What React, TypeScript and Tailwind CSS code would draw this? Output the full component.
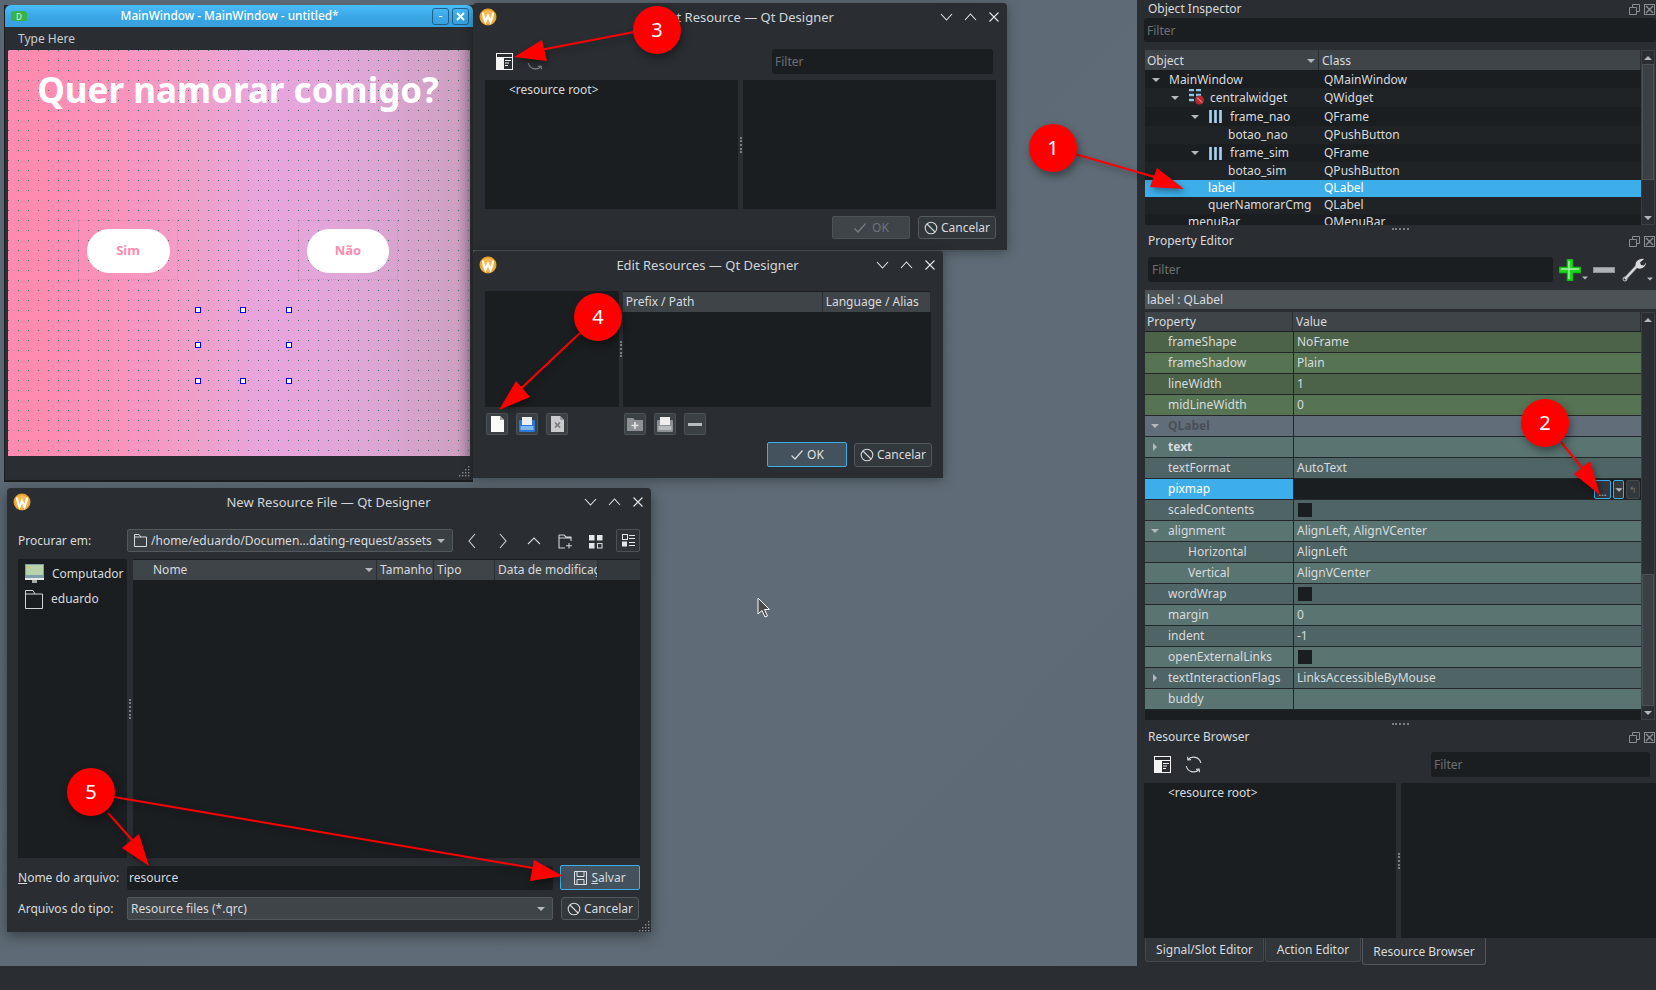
import React from "react";

const FONT = "font-['Noto_Sans',sans-serif]";

function WIcon({ className }: { className: string }) {
  return (
    <svg viewBox="0 0 18 18" className={className}>
      <circle cx="9" cy="9" r="8.5" fill="#e8a02c" />
      <circle cx="9" cy="9" r="6.8" fill="#f2bc55" />
      <path d="M3.6 4.5 L6.4 14 L9 7.6 L11.6 14 L14.4 4.5" fill="none" stroke="#fff" strokeWidth="2" />
    </svg>
  );
}

function WinControls() {
  return (
    <svg viewBox="0 0 60 14" className="w-[60px] h-[14px] shrink-0" fill="none" stroke="#e4e7ea" strokeWidth="1.1">
      <path d="M1 4 L6.5 10 L12 4" />
      <path d="M25 10 L30.5 4 L36 10" />
      <path d="M49.5 2.5 L58.5 11.5 M58.5 2.5 L49.5 11.5" />
    </svg>
  );
}

function Title({ text }: { text: string }) {
  return (
    <div className="h-[28px] mb-[2px] shrink-0 grid grid-cols-[1fr_auto_1fr] items-center pl-[6px] pr-[7px]">
      <WIcon className="w-[18px] h-[18px]" />
      <div className="text-center text-[13px] text-[#d2d6da] whitespace-nowrap pt-[1px]">{text}</div>
      <div className="flex justify-end"><WinControls /></div>
    </div>
  );
}

function Filter({ className }: { className: string }) {
  return (
    <div className={`bg-[#1b1e20] rounded-[3px] text-[12px] text-[#6c7074] flex items-center px-[3px] ${className}`}>Filter</div>
  );
}

function NoSign({ className }: { className: string }) {
  return (
    <svg viewBox="0 0 14 14" className={className} fill="none" stroke="#d4d7da" strokeWidth="1.1">
      <circle cx="7" cy="7" r="5.8" />
      <path d="M3 3 L11 11" />
    </svg>
  );
}

function Check({ color }: { color: string }) {
  return (
    <svg viewBox="0 0 14 12" className="w-[14px] h-[12px]" fill="none" stroke={color} strokeWidth="1.2">
      <path d="M1.5 6.5 L5 10 L12.5 1.5" />
    </svg>
  );
}

function CancelBtn({ className }: { className: string }) {
  return (
    <div className={`bg-[#33383d] border border-[#53585d] rounded-[3px] flex items-center justify-center gap-[3px] text-[12px] text-[#d8dbde] ${className}`}>
      <NoSign className="w-[14px] h-[14px]" />
      Cancelar
    </div>
  );
}

function ResIcon() {
  return (
    <svg viewBox="0 0 17 17" className="w-[17px] h-[17px] shrink-0">
      <rect width="17" height="17" fill="#f4f4f4" />
      <rect x="1" y="1" width="15" height="3" fill="#2a2e32" />
      <rect x="8" y="5" width="8" height="11" fill="#2a2e32" />
      <rect x="9" y="7" width="6" height="1" fill="#eee" />
      <rect x="9" y="9.5" width="4" height="1" fill="#eee" />
      <rect x="9" y="12" width="3" height="1" fill="#eee" />
    </svg>
  );
}

function ReloadIcon({ color }: { color: string }) {
  return (
    <svg viewBox="0 0 17 17" className="w-[17px] h-[17px]" fill="none" stroke={color} strokeWidth="1.1">
      <path d="M3 3.5 A7.5 7.5 0 0 1 15.8 7" />
      <path d="M14 13.5 A7.5 7.5 0 0 1 1.2 10" />
      <path d="M2.6 0.8 L2.8 4 L6 3.6" />
      <path d="M14.4 16.2 L14.2 13 L11 13.4" />
    </svg>
  );
}

function ToolBtn({ children }: { children: React.ReactNode }) {
  return (
    <div className="w-[22px] h-[22px] bg-[#3b4045] border border-[#4d5257] rounded-[2px] flex items-center justify-center shrink-0">
      {children}
    </div>
  );
}

function DocIcon({ fill, x }: { fill: string; x?: boolean }) {
  return (
    <svg viewBox="0 0 13 16" className="w-[13px] h-[16px]">
      <path d="M0 0 H9 L13 4 V16 H0 Z" fill={fill} />
      <path d="M9 0 L13 4 H9 Z" fill="#9a9ea2" />
      {x && <path d="M4 6.5 L9 11.5 M9 6.5 L4 11.5" stroke="#777" strokeWidth="1.6" />}
    </svg>
  );
}

function SaveIcon({ blue }: { blue: boolean }) {
  const a = blue ? "#2a78d4" : "#8d9195";
  const b = blue ? "#7fb8f0" : "#b8bbbe";
  return (
    <svg viewBox="0 0 16 15" className="w-[16px] h-[15px]">
      <rect y="3" width="16" height="12" rx="1" fill={a} />
      <rect x="3" y="0" width="10" height="8" fill="#eee" />
      <rect x="1.5" y="9" width="13" height="4" fill={b} />
    </svg>
  );
}

function Header({ children, className }: { children: React.ReactNode; className: string }) {
  return (
    <div className={`bg-[#3f4449] border-r border-[#2a2e32] text-[12px] text-[#d8dbde] flex items-center overflow-hidden whitespace-nowrap h-full ${className}`}>
      {children}
    </div>
  );
}

function Tri({ dir = "down", className = "" }: { dir?: "down" | "right" | "up"; className?: string }) {
  const d = dir === "down" ? "M0 1 H8 L4 5 Z" : dir === "right" ? "M2 -1 L6 3 L2 7 Z" : "M0 5 H8 L4 1 Z";
  return (
    <svg viewBox="0 0 8 6" className={`w-[8px] h-[6px] shrink-0 overflow-visible ${className}`}>
      <path d={d} fill="#b4b8bc" />
    </svg>
  );
}

function Grip() {
  return (
    <svg viewBox="0 0 12 12" className="w-[12px] h-[12px]" fill="#888c90">
      {[[10,1],[7,4],[10,4],[4,7],[7,7],[10,7],[1,10],[4,10],[7,10],[10,10]].map(([x, y], i) => (
        <rect key={i} x={x} y={y} width="1.4" height="1.4" />
      ))}
    </svg>
  );
}

function Dots({ className }: { className: string }) {
  return <div className={`border-l-2 border-dotted border-[#7a7e82] ${className}`} />;
}

function MainWindow() {
  const handles: [number, number][] = [
    [190, 260], [235, 260], [281, 260],
    [190, 295], [281, 295],
    [190, 331], [235, 331], [281, 331],
  ];
  return (
    <div className="absolute left-[4px] top-[5px] w-[469px] h-[477px] bg-[#2a2e32] flex flex-col border-b-2 border-l border-[#1b1e20]">
      <div className="h-[22px] shrink-0 rounded-t-[6px] bg-[linear-gradient(#4bbdfb,#3aa6e4_55%,#37a0dd)] flex items-center pl-[6px] pr-[4px]">
        <svg viewBox="0 0 16 12" className="w-[16px] h-[12px] shrink-0">
          <path d="M2 1 H14 L16 3 V11 H2 L0 9 V3 Z" fill="#37b34a" />
          <text x="8" y="9.5" textAnchor="middle" fontSize="8" fill="#dff5df" fontFamily="Noto Sans">D</text>
        </svg>
        <div className="flex-1 text-center text-[11.8px] font-medium text-white">MainWindow - MainWindow - untitled*</div>
        <div className="flex gap-[3px]">
          <div className="w-[17px] h-[17px] rounded-[3px] border border-[#1f5f88] flex items-center justify-center text-[12px] leading-none text-white">-</div>
          <div className="w-[17px] h-[17px] rounded-[3px] border border-[#1f5f88] flex items-center justify-center">
            <svg viewBox="0 0 9 9" className="w-[9px] h-[9px]" stroke="#fff" strokeWidth="1.8"><path d="M1 1 L8 8 M8 1 L1 8" /></svg>
          </div>
        </div>
      </div>
      <div className="h-[23px] shrink-0 flex items-center pl-[13px] text-[12px] text-[#c8ccd0]">Type Here</div>
      <div className="mx-[3px] h-[406px] shrink-0 relative overflow-hidden bg-[linear-gradient(90deg,#ff8ab0_0%,#ff8bb1_8%,#f697c0_30%,#efa0cc_42%,#e8a5dd_55%,#e0a6d8_75%,#cfa0c2_97%,#a8829f_100%)]">
        <div className="absolute inset-0 bg-[radial-gradient(circle_at_0.5px_0.5px,#3d6e5e_0.7px,transparent_0.7px)] bg-[length:10px_10px]" />
        <div className="absolute left-[29px] top-[18px] w-[402px] text-center text-[35px] leading-[44px] font-bold text-white whitespace-nowrap">Quer namorar comigo?</div>
        <div className="absolute left-[70px] top-[170px] w-[100px] h-[60px] pt-[2px] border border-dotted border-[#c48ab0]/70 flex items-center justify-center">
          <div className="w-[83px] h-[44px] rounded-[22px] bg-white flex items-center justify-center text-[13px] font-bold text-[#ff8ab0]">Sim</div>
        </div>
        <div className="absolute left-[290px] top-[170px] w-[100px] h-[60px] pt-[2px] border border-dotted border-[#c48ab0]/70 flex items-center justify-center">
          <div className="w-[82px] h-[44px] rounded-[22px] bg-white flex items-center justify-center text-[13px] font-bold text-[#ff8ab0]">Não</div>
        </div>
        {handles.map(([x, y], i) => (
          <div key={i} className="absolute w-[6px] h-[6px] bg-white border border-[#0000ff]" style={{ left: x - 3 + "px", top: y - 3 + "px" }} />
        ))}
      </div>
      <div className="flex-1 flex justify-end items-end pr-[3px] pb-[3px]">
        <Grip />
      </div>
    </div>
  );
}

function SelectResource() {
  return (
    <div className="absolute left-[473px] top-[3px] w-[534px] h-[247px] bg-[#2a2e32] rounded-t-[4px] flex flex-col shadow-[0_2px_12px_rgba(0,0,0,0.35)]">
      <Title text="Select Resource — Qt Designer" />
      <div className="h-[47px] shrink-0 flex items-center pl-[23px] pr-[14px] pt-[9px]">
        <ResIcon />
        <div className="ml-[14px] opacity-60"><ReloadIcon color="#b8bcc0" /></div>
        <div className="flex-1" />
        <Filter className="w-[221px] h-[25px] pt-[1px]" />
      </div>
      <div className="h-[129px] shrink-0 flex mx-[12px] items-stretch">
        <div className="w-[253px] bg-[#1b1e20] pl-[24px] pt-[1px] text-[12px] text-[#d8dbde]">&lt;resource root&gt;</div>
        <div className="w-[5px] flex items-center justify-center"><Dots className="h-[16px]" /></div>
        <div className="flex-1 bg-[#1b1e20] mr-[-1px]" />
      </div>
      <div className="flex justify-end gap-[8px] pr-[11px] pt-[7px]">
        <div className="w-[78px] h-[23px] bg-[#3f4449] border border-[#4d5257] rounded-[2px] flex items-center justify-center gap-[5px] text-[12px] text-[#6f7377]">
          <Check color="#7a7e82" />OK
        </div>
        <CancelBtn className="w-[78px] h-[23px]" />
      </div>
    </div>
  );
}

function EditResources() {
  return (
    <div className="absolute left-[473px] top-[250px] w-[470px] h-[228px] bg-[#2a2e32] border-t border-[#43484d] rounded-t-[4px] flex flex-col shadow-[0_2px_12px_rgba(0,0,0,0.35)]">
      <Title text="Edit Resources — Qt Designer" />
      <div className="h-[116px] mt-[10px] shrink-0 flex mx-[12px]">
        <div className="w-[134px] bg-[#1b1e20]" />
        <div className="w-[4px] flex items-center justify-center"><Dots className="h-[16px]" /></div>
        <div className="w-[309px] bg-[#1b1e20] flex flex-col">
          <div className="h-[20px] mt-[1px] flex">
            <Header className="w-[200px] pl-[3px]">Prefix / Path</Header>
            <Header className="flex-1 pl-[3px]">Language / Alias</Header>
          </div>
        </div>
      </div>
      <div className="flex mt-[6px] pl-[13px] gap-[8px]">
        <ToolBtn><DocIcon fill="#fafafa" /></ToolBtn>
        <ToolBtn><SaveIcon blue /></ToolBtn>
        <ToolBtn><DocIcon fill="#c8cacc" x /></ToolBtn>
        <div className="w-[40px]" />
        <ToolBtn>
          <svg viewBox="0 0 16 14" className="w-[16px] h-[14px]">
            <path d="M0 1 H6 L8 3 H16 V14 H0 Z" fill="#8d9195" />
            <path d="M8 5 V12 M4.5 8.5 H11.5" stroke="#e4e4e4" strokeWidth="1.6" />
          </svg>
        </ToolBtn>
        <ToolBtn><SaveIcon blue={false} /></ToolBtn>
        <ToolBtn>
          <div className="w-[14px] h-[3px] bg-[#b8bbbe]" />
        </ToolBtn>
      </div>
      <div className="flex justify-end gap-[7px] pr-[11px] pt-[7px] items-center">
        <div className="w-[80px] h-[25px] bg-[#43525c] border border-[#3daee9] rounded-[2px] flex items-center justify-center gap-[3px] text-[12px] text-[#e0e3e6]">
          <Check color="#d8dbde" />OK
        </div>
        <CancelBtn className="w-[78px] h-[24px]" />
      </div>
    </div>
  );
}

function NavIcons() {
  return (
    <div className="flex items-center">
      <svg viewBox="0 0 150 16" className="w-[150px] h-[16px] ml-[12px] shrink-0" fill="none" stroke="#d0d4d8" strokeWidth="1.1">
        <path d="M10 1 L4 8 L10 15" />
        <path d="M35 1 L41 8 L35 15" />
        <path d="M63 11 L69 5 L75 11" />
        <path d="M94 2 H99 L101 4 H106 V8 M94 2 V15 H100 M94 5 H106 M104 10 V15.5 M101 12.8 H107" />
        <g fill="#e4e7ea" stroke="none">
          <rect x="124" y="2" width="5.5" height="5.5" />
          <rect x="132" y="2" width="5.5" height="5.5" />
          <rect x="124" y="10" width="5.5" height="5.5" />
        </g>
        <rect x="132.5" y="10.5" width="4.5" height="4.5" />
      </svg>
      <div className="w-[24px] h-[23px] ml-[1px] bg-[#2f3338] border border-[#4d5257] rounded-[2px] flex items-center justify-center">
        <svg viewBox="0 0 13 13" className="w-[13px] h-[13px]" fill="#e4e7ea">
          <rect x="0.5" y="0.5" width="5" height="5" fill="none" stroke="#e4e7ea" />
          <rect x="7" y="1" width="6" height="1" />
          <rect x="7" y="4" width="6" height="1" />
          <rect x="0" y="7.5" width="5" height="5" />
          <rect x="7" y="8" width="6" height="1" />
          <rect x="7" y="11" width="6" height="1" />
        </svg>
      </div>
    </div>
  );
}

function NewResource() {
  return (
    <div className="absolute left-[7px] top-[488px] w-[644px] h-[444px] bg-[#2a2e32] rounded-t-[4px] flex flex-col shadow-[0_4px_14px_rgba(0,0,0,0.4)] text-[12px] text-[#d8dbde]">
      <Title text="New Resource File — Qt Designer" />
      <div className="flex items-center h-[23px] mt-[11px] shrink-0 pl-[11px]">
        <div className="w-[109px]">Procurar em:</div>
        <div className="w-[326px] h-[23px] bg-[#3a3f44] border border-[#53585d] rounded-[2px] flex items-center pl-[6px] pr-[7px] gap-[4px]">
          <svg viewBox="0 0 13 13" className="w-[13px] h-[13px] shrink-0" fill="none" stroke="#d8dbde"><path d="M.5 12.5 V.5 H5 L7 3 H12.5 V12.5 Z M.5 3 H7" /></svg>
          <span className="flex-1 whitespace-nowrap overflow-hidden">/home/eduardo/Documen...dating-request/assets</span>
          <Tri />
        </div>
        <NavIcons />
      </div>
      <div className="h-[299px] mt-[7px] shrink-0 flex ml-[11px]">
        <div className="w-[109px] bg-[#1b1e20] pt-[4px] flex flex-col gap-[5px] pl-[7px]">
          <div className="flex items-center gap-[8px] h-[21px]">
            <svg viewBox="0 0 19 20" className="w-[19px] h-[20px] shrink-0">
              <rect x="0" y="0" width="19" height="14" fill="#7d9faa" />
              <rect x="1" y="1" width="17" height="10" fill="#b7d3ac" />
              <rect x="2" y="2" width="3" height="2" fill="#e8c05a" />
              <rect x="0" y="14" width="19" height="2" fill="#e8e8e8" />
              <rect x="7" y="16" width="5" height="3" fill="#aaa" />
            </svg>
            Computador
          </div>
          <div className="flex items-center gap-[8px] h-[20px]">
            <svg viewBox="0 0 18 19" className="w-[18px] h-[19px] shrink-0" fill="none" stroke="#d0d4d8"><path d="M.5 18.5 V.5 H8 L10 4 H17.5 V18.5 Z M.5 4 H10" /></svg>
            eduardo
          </div>
        </div>
        <div className="w-[6px] flex items-center justify-center"><Dots className="h-[20px]" /></div>
        <div className="w-[507px] bg-[#1b1e20] flex flex-col">
          <div className="h-[20px] mt-[1px] flex bg-[#33383d]">
            <Header className="w-[244px] pl-[20px] justify-between pr-[3px]">Nome<Tri /></Header>
            <Header className="w-[57px] pl-[3px]">Tamanho</Header>
            <Header className="w-[61px] pl-[3px]">Tipo</Header>
            <Header className="w-[103px] pl-[3px]">Data de modificação</Header>
          </div>
        </div>
      </div>
      <div className="flex items-center h-[25px] mt-[7px] shrink-0 pl-[11px]">
        <div className="w-[109px]"><span className="underline">N</span>ome do arquivo:</div>
        <div className="w-[426px] h-[24px] bg-[#1b1e20] rounded-[3px] flex items-center pl-[2px]">resource</div>
        <div className="w-[80px] h-[25px] ml-[7px] bg-[#43525c] border border-[#3daee9] rounded-[2px] flex items-center justify-center gap-[4px]">
          <svg viewBox="0 0 13 14" className="w-[13px] h-[14px]" fill="none" stroke="#e0e3e6"><path d="M.5 .5 H12.5 V13.5 H.5 Z M3 .5 V5.5 H10 V.5 M3 13.5 V8.5 H10 V13.5" /></svg>
          <span><span className="underline">S</span>alvar</span>
        </div>
      </div>
      <div className="flex items-center h-[23px] mt-[7px] shrink-0 pl-[11px]">
        <div className="w-[109px]">Arquivos do tipo:</div>
        <div className="w-[426px] h-[23px] bg-[#3f4449] border border-[#53585d] rounded-[2px] flex items-center justify-between pl-[3px] pr-[7px]">
          Resource files (*.qrc)<Tri />
        </div>
        <CancelBtn className="w-[78px] h-[23px] ml-[8px]" />
      </div>
      <div className="flex-1 flex justify-end items-end pr-[1px] pb-[1px]"><Grip /></div>
    </div>
  );
}

function Dock({ title }: { title: string }) {
  return (
    <div className="h-[18px] shrink-0 flex items-center justify-between pl-[11px] pr-[1px] text-[12px] text-[#d8dbde]">
      {title}
      <div className="flex gap-[4px]">
        <svg viewBox="0 0 11 11" className="w-[11px] h-[11px]" fill="none" stroke="#8a8e92"><path d="M3.5 3 V.5 H10.5 V7.5 H8 M.5 3.5 H7.5 V10.5 H.5 Z" /></svg>
        <svg viewBox="0 0 11 11" className="w-[11px] h-[11px]" fill="none" stroke="#8a8e92"><rect x=".5" y=".5" width="10" height="10" /><path d="M2 2 L9 9 M9 2 L2 9" strokeWidth="1.4" /></svg>
      </div>
    </div>
  );
}

function ScrollBar({ thumb, thumbEnd }: { thumb: string; thumbEnd?: boolean }) {
  return (
    <div className="w-[14px] mr-[1px] shrink-0 bg-[#2a2e32] border border-[#3b4045] flex flex-col">
      <div className="h-[13px] shrink-0 flex items-center justify-center"><Tri dir="up" /></div>
      <div className={`flex-1 flex flex-col ${thumbEnd ? "justify-end" : ""}`}>
        <div className={`bg-[#3b4045] border border-[#4d5257] ${thumb}`} />
      </div>
      <div className="h-[13px] shrink-0 flex items-center justify-center"><Tri /></div>
    </div>
  );
}

type TreeRow = { n: string; c: string; x: number; arrow?: boolean; icon?: "w" | "f"; h: number; sel?: boolean; adj?: string };
const tree: TreeRow[] = [
  { n: "MainWindow", c: "QMainWindow", x: 25, arrow: true, h: 18, adj: "pt-[1px]" },
  { n: "centralwidget", c: "QWidget", x: 66, arrow: true, icon: "w", h: 19 },
  { n: "frame_nao", c: "QFrame", x: 86, arrow: true, icon: "f", h: 19 },
  { n: "botao_nao", c: "QPushButton", x: 84, h: 18 },
  { n: "frame_sim", c: "QFrame", x: 86, arrow: true, icon: "f", h: 18 },
  { n: "botao_sim", c: "QPushButton", x: 84, h: 18 },
  { n: "label", c: "QLabel", x: 64, h: 17, sel: true, adj: "pb-[1px]" },
  { n: "querNamorarCmg", c: "QLabel", x: 64, h: 17, adj: "pb-[1px]" },
  { n: "menuBar", c: "QMenuBar", x: 44, h: 17, adj: "pb-[1px]" },
];

function ObjectInspector() {
  return (
    <div className="shrink-0 flex flex-col">
      <Dock title="Object Inspector" />
      <Filter className="h-[24px] ml-[7px] pt-[1px]" />
      <div className="flex h-[175px] mt-[8px] ml-[8px]">
        <div className="flex-1 flex flex-col bg-[#1b1e20] overflow-hidden">
          <div className="h-[20px] shrink-0 flex">
            <Header className="w-[174px] pl-[2px] pt-[1px] justify-between pr-[3px]">Object<Tri /></Header>
            <Header className="flex-1 pl-[3px] pt-[1px]">Class</Header>
          </div>
          {tree.map((r, i) => (
            <div key={r.n} className={`shrink-0 flex items-center text-[12px] relative ${r.adj ?? ""} ${r.sel ? "bg-[#3daee9] text-white" : i % 2 ? "bg-[#1f2326] text-[#d8dbde]" : "bg-[#1b1e20] text-[#d8dbde]"}`} style={{ height: r.h + "px" }}>
              {r.arrow && <div className="absolute flex" style={{ left: r.x - (r.icon ? 40 : 18) + "px" }}><Tri /></div>}
              {r.icon === "w" && (
                <svg viewBox="0 0 18 17" className="absolute left-[44px] w-[18px] h-[17px]">
                  <path d="M0 1 H5 M7 1 H12 M0 6 H5 M7 6 H12 M0 11 H5" stroke="#8fc3e8" strokeWidth="2.4" />
                  <circle cx="10.5" cy="11" r="4.5" fill="#b52a2a" />
                  <path d="M8 8.5 L13 13.5" stroke="#f2bcbc" />
                </svg>
              )}
              {r.icon === "f" && (
                <svg viewBox="0 0 13 13" className="absolute left-[64px] w-[13px] h-[13px]" stroke="#a8d4f4" strokeWidth="2.6">
                  <path d="M1.5 0 V13 M6.5 0 V13 M11.5 0 V13" />
                </svg>
              )}
              <div className="w-[179px] shrink-0 whitespace-nowrap" style={{ paddingLeft: r.x - 1 + "px" }}>{r.n}</div>
              <div className="flex-1">{r.c}</div>
            </div>
          ))}
        </div>
        <ScrollBar thumb="h-[116px]" />
      </div>
    </div>
  );
}

type PropRow = { n: string; v?: string; bg: string; bold?: boolean; indent?: boolean; tri?: "down" | "right"; check?: boolean; pix?: boolean; section?: boolean };
const G1 = "bg-[#4c6349]";
const G2 = "bg-[#567353]";
const T1 = "bg-[#5a7472]";
const T2 = "bg-[#4f6465]";
const props: PropRow[] = [
  { n: "frameShape", v: "NoFrame", bg: G1 },
  { n: "frameShadow", v: "Plain", bg: G2 },
  { n: "lineWidth", v: "1", bg: G1 },
  { n: "midLineWidth", v: "0", bg: G2 },
  { n: "QLabel", bg: "bg-[#616e7a]", section: true, tri: "down" },
  { n: "text", bg: T1, bold: true, tri: "right" },
  { n: "textFormat", v: "AutoText", bg: T2 },
  { n: "pixmap", bg: "bg-[#1b1e20]", pix: true },
  { n: "scaledContents", bg: T2, check: true },
  { n: "alignment", v: "AlignLeft, AlignVCenter", bg: T1, tri: "down" },
  { n: "Horizontal", v: "AlignLeft", bg: T2, indent: true },
  { n: "Vertical", v: "AlignVCenter", bg: T1, indent: true },
  { n: "wordWrap", bg: T2, check: true },
  { n: "margin", v: "0", bg: T1 },
  { n: "indent", v: "-1", bg: T2 },
  { n: "openExternalLinks", bg: T1, check: true },
  { n: "textInteractionFlags", v: "LinksAccessibleByMouse", bg: T2, tri: "right" },
  { n: "buddy", bg: T1 },
];

function PropertyEditor() {
  return (
    <div className="shrink-0 flex flex-col">
      <Dock title="Property Editor" />
      <div className="flex items-center h-[25px] mt-[7px] ml-[11px]">
        <Filter className="w-[405px] h-[25px] px-[4px]" />
        <div className="flex-1 flex items-center justify-between pl-[6px] pr-[2px]">
          <div className="flex items-end">
            <svg viewBox="0 0 22 22" className="w-[22px] h-[22px]">
              <path d="M8 0 H14 V8 H22 V14 H14 V22 H8 V14 H0 V8 H8 Z" fill="#1ed51e" stroke="#0f9a0f" strokeWidth=".8" />
              <path d="M10 2 V20 M2 10 H20" stroke="#a8f5a8" strokeWidth="1.4" />
            </svg>
            <Tri className="scale-75" />
          </div>
          <div className="w-[22px] h-[6px] bg-[#b0b4b8] border border-[#8f9397] mr-[3px]" />
          <div className="flex items-end">
            <svg viewBox="0 0 24 24" className="w-[24px] h-[24px]" fill="none">
              <path d="M3 21 L15 8" stroke="#a8acb0" strokeWidth="3" />
              <path d="M3 21 L15 8" stroke="#e4e6e8" strokeWidth="1.2" />
              <path d="M14 9 C12 4 17 0 22 1 L18 4.5 L19 7 L22 7.5 L24 4.5 C24 9 19 12 15 10 Z" fill="#d8dadc" />
              <circle cx="3" cy="21" r="2" stroke="#c8cacc" />
            </svg>
            <Tri className="scale-75" />
          </div>
        </div>
      </div>
      <div className="h-[19px] mt-[8px] ml-[8px] bg-[#4d5257] flex items-center pl-[2px] text-[12px] text-[#d8dbde]">label : QLabel</div>
      <div className="flex h-[408px] mt-[3px] ml-[8px]">
        <div className="flex-1 flex flex-col bg-[#1b1e20] overflow-hidden">
          <div className="h-[19px] shrink-0 flex">
            <Header className="w-[148px] pl-[2px]">Property</Header>
            <Header className="flex-1 pl-[3px]">Value</Header>
          </div>
          <div className="h-[1px] shrink-0 bg-[#1b1e20]" />
          {props.map((p) => (
            <div key={p.n} className={`h-[21px] shrink-0 flex text-[12px] border-b border-[#23272a] ${p.bg} ${p.section ? "text-[#4a5057] font-bold" : "text-[#d8dbde]"}`}>
              <div className={`w-[149px] shrink-0 relative flex items-center border-r border-[#23272a] ${p.pix ? "bg-[#3daee9] text-white" : ""} ${p.indent ? "pl-[43px]" : "pl-[23px]"} ${p.bold ? "font-bold" : ""}`}>
                {p.tri && <div className="absolute left-[6px] top-[7px] flex"><Tri dir={p.tri} /></div>}
                {p.n}
              </div>
              <div className="flex-1 flex items-center pl-[3px] relative">
                {p.v}
                {p.check && <div className="w-[14px] h-[14px] bg-[#1b1e20] ml-[1px]" />}
                {p.pix && (
                  <div className="absolute right-[1px] top-[1px] flex gap-[2px]">
                    <div className="w-[17px] h-[19px] bg-[#33383d] border border-[#3daee9] rounded-[2px] flex items-end justify-center text-[10px] leading-[12px] text-[#c8ccd0]">...</div>
                    <div className="w-[11px] h-[19px] bg-[#33383d] border border-[#3daee9] rounded-[2px] flex items-center justify-center"><Tri className="scale-90" /></div>
                    <div className="w-[14px] h-[19px] bg-[#33383d] border border-[#43484d] rounded-[2px] flex items-center justify-center text-[9px] text-[#6f7377]">↰</div>
                  </div>
                )}
              </div>
            </div>
          ))}
        </div>
        <ScrollBar thumb="h-[132px]" thumbEnd />
      </div>
    </div>
  );
}

function ResourceBrowser() {
  return (
    <div className="shrink-0 flex flex-col">
      <Dock title="Resource Browser" />
      <div className="h-[31px] mt-[3px] flex items-center pl-[17px] pr-[6px]">
        <ResIcon />
        <div className="ml-[14px]"><ReloadIcon color="#d8dbde" /></div>
        <div className="flex-1" />
        <Filter className="w-[219px] h-[25px]" />
      </div>
      <div className="flex h-[155px] mt-[3px] ml-[7px]">
        <div className="w-[252px] bg-[#1b1e20] pl-[24px] pt-[1px] text-[12px] text-[#d8dbde]">&lt;resource root&gt;</div>
        <div className="w-[5px] flex items-center justify-center"><Dots className="h-[16px]" /></div>
        <div className="flex-1 bg-[#1b1e20]" />
      </div>
      <div className="flex items-start ml-[8px] text-[12px] text-[#d8dbde]">
        <div className="w-[119px] h-[24px] bg-[#31363a] border border-t-0 border-[#43484d] rounded-b-[3px] flex items-center justify-center">Signal/Slot Editor</div>
        <div className="w-[96px] h-[24px] ml-[1px] bg-[#31363a] border border-t-0 border-[#43484d] rounded-b-[3px] flex items-center justify-center">Action Editor</div>
        <div className="w-[124px] h-[27px] ml-[1px] bg-[#2f3338] border border-t-0 border-[#53585d] rounded-b-[3px] flex items-center justify-center pt-[1px]">Resource Browser</div>
      </div>
    </div>
  );
}

function Splitter({ h }: { h: string }) {
  return (
    <div className={`shrink-0 flex items-center justify-center pl-[8px] ${h}`}>
      <div className="w-[17px] border-t-2 border-dotted border-[#7a7e82]" />
    </div>
  );
}

function RightPanel() {
  return (
    <div className="absolute left-[1137px] top-0 w-[519px] h-[990px] bg-[#2a2e32] flex flex-col">
      <ObjectInspector />
      <Splitter h="h-[7px]" />
      <PropertyEditor />
      <Splitter h="h-[8px]" />
      <ResourceBrowser />
    </div>
  );
}

function Annotations() {
  const circles: [number, number, string][] = [
    [1053, 148, "1"],
    [1545, 423, "2"],
    [657, 30, "3"],
    [598, 317, "4"],
    [91, 792, "5"],
  ];
  return (
    <>
      <svg viewBox="0 0 1656 990" className="absolute inset-0 w-[1656px] h-[990px] pointer-events-none drop-shadow-[2px_3px_3px_rgba(0,0,0,0.4)]" fill="#ff0000" stroke="#ff0000">
        <g strokeWidth="2" fill="none">
          <path d="M1075 154 L1165 180" />
          <path d="M1561 442 L1592 480" />
          <path d="M634 32 L530 52" />
          <path d="M580 333 L512 397" />
          <path d="M108 813 L141 850" />
          <path d="M114 797 L545 870" />
        </g>
        <g stroke="none">
          <polygon points="1157,168 1184,189 1150,187" />
          <polygon points="1590,461 1600,495 1574,474" />
          <polygon points="542,40 547,61 514,57" />
          <polygon points="516,381 530,397 499,410" />
          <polygon points="139,834 122,848 149,866" />
          <polygon points="534,860 530,881 563,876" />
        </g>
      </svg>
      {circles.map(([x, y, t]) => (
        <div key={t} className="absolute w-[48px] h-[48px] rounded-full bg-[#ff0000] flex items-center justify-center text-[20px] text-white shadow-[2px_4px_8px_rgba(0,0,0,0.4)]" style={{ left: x - 24 + "px", top: y - 24 + "px" }}>
          {t}
        </div>
      ))}
      <svg viewBox="0 0 14 22" className="absolute left-[757px] top-[597px] w-[14px] h-[22px]">
        <path d="M1 1 V17 L5 13.5 L8 20 L10.5 19 L7.5 12.5 H12.5 Z" fill="#4a4a4a" stroke="#fff" strokeWidth="1" />
      </svg>
    </>
  );
}

export default function App() {
  return (
    <div className={`relative w-[1656px] h-[990px] overflow-hidden bg-[linear-gradient(135deg,#5a6671,#5f6b76_50%,#5d6974)] ${FONT}`}>
      <MainWindow />
      <SelectResource />
      <EditResources />
      <NewResource />
      <RightPanel />
      <div className="absolute left-0 top-[966px] w-[1137px] h-[24px] bg-[#2a2e32]" />
      <Annotations />
    </div>
  );
}
